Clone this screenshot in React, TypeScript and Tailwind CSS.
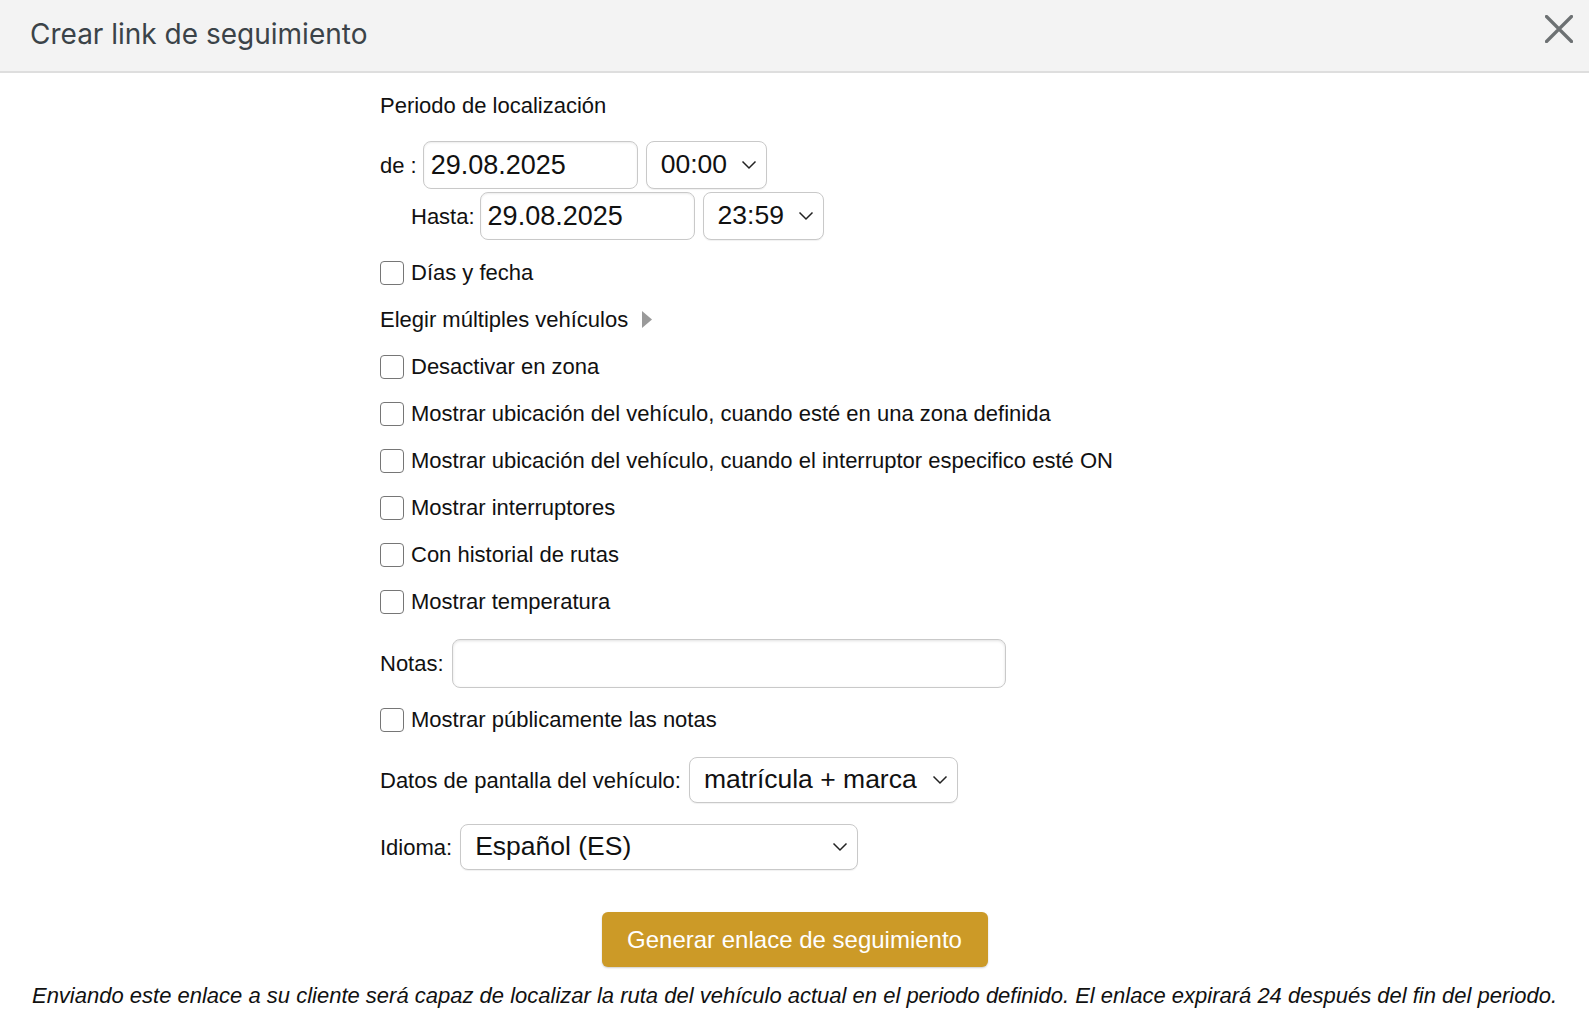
import React from 'react';

const body = { fontFamily: '"Liberation Sans", Arial, sans-serif' };

function Chevron() {
  return (
    <svg width="16" height="10" viewBox="0 0 16 10" className="shrink-0">
      <path d="M1.5 1.5 L8 8 L14.5 1.5" fill="none" stroke="#222" strokeWidth="1.5" />
    </svg>
  );
}

function Select({ value, className }: { value: string; className: string }) {
  return (
    <div
      className={`flex items-center justify-between rounded-[8px] border border-[#c9c9c9] bg-white pl-[14px] pr-[9px] text-[26.5px] text-[#111] shadow-[0_1px_1px_rgba(0,0,0,0.06)] ${className}`}
    >
      <span>{value}</span>
      <Chevron />
    </div>
  );
}

function DateInput({ value }: { value: string }) {
  return (
    <div className="flex h-[48px] w-[215px] items-center rounded-[8px] border border-[#c9c9c9] bg-white px-[7px] text-[27px] text-[#111] shadow-[inset_0_1px_2px_rgba(0,0,0,0.08)]">
      {value}
    </div>
  );
}

function Check({ label }: { label: string }) {
  return (
    <div className="flex h-[47px] items-center">
      <span className="mr-[7px] inline-block h-[24px] w-[24px] shrink-0 rounded-[4px] border-[1.5px] border-[#767676] bg-white" />
      <span>{label}</span>
    </div>
  );
}

export default function App() {
  const checks = [
    'Mostrar ubicación del vehículo, cuando esté en una zona definida',
    'Mostrar ubicación del vehículo, cuando el interruptor especifico esté ON',
    'Mostrar interruptores',
    'Con historial de rutas',
    'Mostrar temperatura',
  ];

  return (
    <div className="min-h-screen w-full bg-white" style={body}>
      {/* Header */}
      <div className="flex h-[73px] items-start justify-between border-b-2 border-[#dedede] bg-[#f3f3f3] pl-[30px] pr-[16px]">
        <h1 className="pt-[13px] text-[28px] text-[#3b4348]" style={{ fontFamily: 'Inter, sans-serif' }}>
          Crear link de seguimiento
        </h1>
        <svg width="28" height="28" viewBox="0 0 28 28" className="mt-[15px]">
          <path d="M1.5 1.5 L26.5 26.5 M26.5 1.5 L1.5 26.5" stroke="#6d7173" strokeWidth="3.2" strokeLinecap="round" />
        </svg>
      </div>

      {/* Form */}
      <div className="ml-[380px] text-[22px] text-[#111]">
        <div className="pt-[19px] leading-[28px]">Periodo de localización</div>

        <div className="mt-[21px] flex items-center">
          <span className="mr-[6px]">de :</span>
          <DateInput value="29.08.2025" />
          <Select value="00:00" className="ml-[8px] h-[48px] w-[121px]" />
        </div>
        <div className="mt-[3px] flex items-center pl-[31px]">
          <span className="mr-[5px]">Hasta:</span>
          <DateInput value="29.08.2025" />
          <Select value="23:59" className="ml-[8px] h-[48px] w-[121px]" />
        </div>

        <div className="mt-[9px]">
          <Check label="Días y fecha" />
          <div className="flex h-[47px] items-center">
            <span>Elegir múltiples vehículos</span>
            <svg width="10" height="17" viewBox="0 0 10 17" className="ml-[14px]">
              <path d="M0 0 L10 8.5 L0 17 Z" fill="#9a9a9a" />
            </svg>
          </div>
          <Check label="Desactivar en zona" />
          {checks.map((c) => (
            <Check key={c} label={c} />
          ))}
        </div>

        <div className="mt-[14px] flex items-center">
          <span className="mr-[8px]">Notas:</span>
          <div className="h-[49px] w-[554px] rounded-[8px] border border-[#c9c9c9] bg-white shadow-[inset_0_1px_3px_rgba(0,0,0,0.12)]" />
        </div>

        <div className="mt-[8px]">
          <Check label="Mostrar públicamente las notas" />
        </div>

        <div className="mt-[14px] flex items-center">
          <span className="mr-[8px]">Datos de pantalla del vehículo:</span>
          <Select value="matrícula + marca" className="h-[46px] w-[269px]" />
        </div>

        <div className="mt-[21px] flex items-center">
          <span className="mr-[8px]">Idioma:</span>
          <Select value="Español (ES)" className="h-[46px] w-[398px]" />
        </div>
      </div>

      <div className="mt-[42px] flex justify-center">
        <button className="h-[55px] w-[386px] rounded-[6px] bg-[#cc9a27] text-[24px] text-white shadow-[0_1px_2px_rgba(0,0,0,0.2)]">
          Generar enlace de seguimiento
        </button>
      </div>

      <p className="mt-[12px] text-center text-[22px] italic text-[#111]">
        Enviando este enlace a su cliente será capaz de localizar la ruta del vehículo actual en el periodo definido. El enlace expirará 24 después del fin del periodo.
      </p>
    </div>
  );
}
